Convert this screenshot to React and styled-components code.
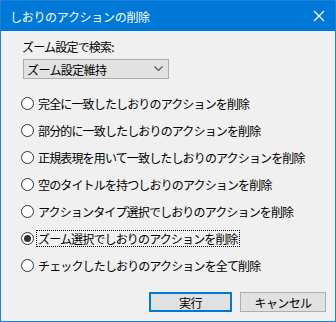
import React, { useState } from "react";
import styled, { createGlobalStyle } from "styled-components";

const GlobalStyle = createGlobalStyle`
  html, body {
    margin: 0;
    padding: 0;
    background: #ffffff;
  }
  * {
    box-sizing: border-box;
  }
`;

const Window = styled.div`
  width: 336px;
  height: 322px;
  border: 1px solid #1883d7;
  background: #f0f0f0;
  display: flex;
  flex-direction: column;
  font-family: "Noto Sans CJK JP", "Noto Sans", sans-serif;
  font-size: 12px;
  color: #000;
`;

const TitleBar = styled.div`
  height: 30px;
  background: #0078d7;
  color: #fff;
  display: flex;
  align-items: center;
  justify-content: space-between;
  padding: 0 10px 0 9px;
  font-size: 12px;
  letter-spacing: -0.3px;
`;

const Body = styled.div`
  flex: 1;
  display: flex;
  flex-direction: column;
  padding: 7px 0 0 20px;
`;

const Label = styled.div`
  height: 18px;
  line-height: 18px;
  margin-bottom: 3px;
  padding-left: 1px;
  letter-spacing: -0.8px;
`;

const Select = styled.div`
  width: 146px;
  height: 20px;
  margin-left: 2px;
  border: 1px solid #adadad;
  background: #e1e1e1;
  display: flex;
  align-items: center;
  justify-content: space-between;
  padding: 0 5px 0 3px;
  letter-spacing: -0.6px;
`;

const RadioList = styled.div`
  display: flex;
  flex-direction: column;
  margin-top: 11px;
`;

const RadioRow = styled.label`
  height: 27px;
  display: flex;
  align-items: center;
  gap: 3px;
  letter-spacing: -0.85px;
`;

const Circle = styled.span`
  width: 13px;
  height: 13px;
  border-radius: 50%;
  border: 1px solid #333;
  background: #fff;
  display: flex;
  align-items: center;
  justify-content: center;
  flex-shrink: 0;

  &::after {
    content: "";
    width: 7px;
    height: 7px;
    border-radius: 50%;
    background: ${(p) => (p.$checked ? "#333" : "transparent")};
  }
`;

const RadioText = styled.span`
  line-height: 15px;
  padding: 0 1px;
  outline: ${(p) => (p.$focused ? "1px dotted #000" : "none")};
`;

const ButtonRow = styled.div`
  margin-top: auto;
  display: flex;
  justify-content: flex-end;
  gap: 8px;
  padding: 0 9px 9px 0;
`;

const Button = styled.button`
  width: ${(p) => (p.$default ? "83px" : "86px")};
  height: 20px;
  font-family: inherit;
  font-size: 12px;
  letter-spacing: -0.6px;
  background: #e1e1e1;
  border: ${(p) => (p.$default ? "2px solid #0078d7" : "1px solid #adadad")};
  padding: 0;
  color: #000;
`;

const options = [
  "完全に一致したしおりのアクションを削除",
  "部分的に一致したしおりのアクションを削除",
  "正規表現を用いて一致したしおりのアクションを削除",
  "空のタイトルを持つしおりのアクションを削除",
  "アクションタイプ選択でしおりのアクションを削除",
  "ズーム選択でしおりのアクションを削除",
  "チェックしたしおりのアクションを全て削除",
];

export default function App() {
  const [selected, setSelected] = useState(5);

  return (
    <>
      <GlobalStyle />
      <Window>
        <TitleBar>
          <span>しおりのアクションの削除</span>
          <svg width="12" height="12" viewBox="0 0 12 12">
            <path d="M1 1L11 11M11 1L1 11" stroke="#fff" strokeWidth="1.2" />
          </svg>
        </TitleBar>
        <Body>
          <Label>ズーム設定で検索:</Label>
          <Select>
            <span>ズーム設定維持</span>
            <svg width="9" height="6" viewBox="0 0 9 6">
              <path d="M0.5 0.5L4.5 4.5L8.5 0.5" stroke="#555" strokeWidth="1.2" fill="none" />
            </svg>
          </Select>
          <RadioList>
            {options.map((text, i) => (
              <RadioRow key={text} onClick={() => setSelected(i)}>
                <Circle $checked={selected === i} />
                <RadioText $focused={selected === i}>{text}</RadioText>
              </RadioRow>
            ))}
          </RadioList>
          <ButtonRow>
            <Button $default>実行</Button>
            <Button>キャンセル</Button>
          </ButtonRow>
        </Body>
      </Window>
    </>
  );
}
